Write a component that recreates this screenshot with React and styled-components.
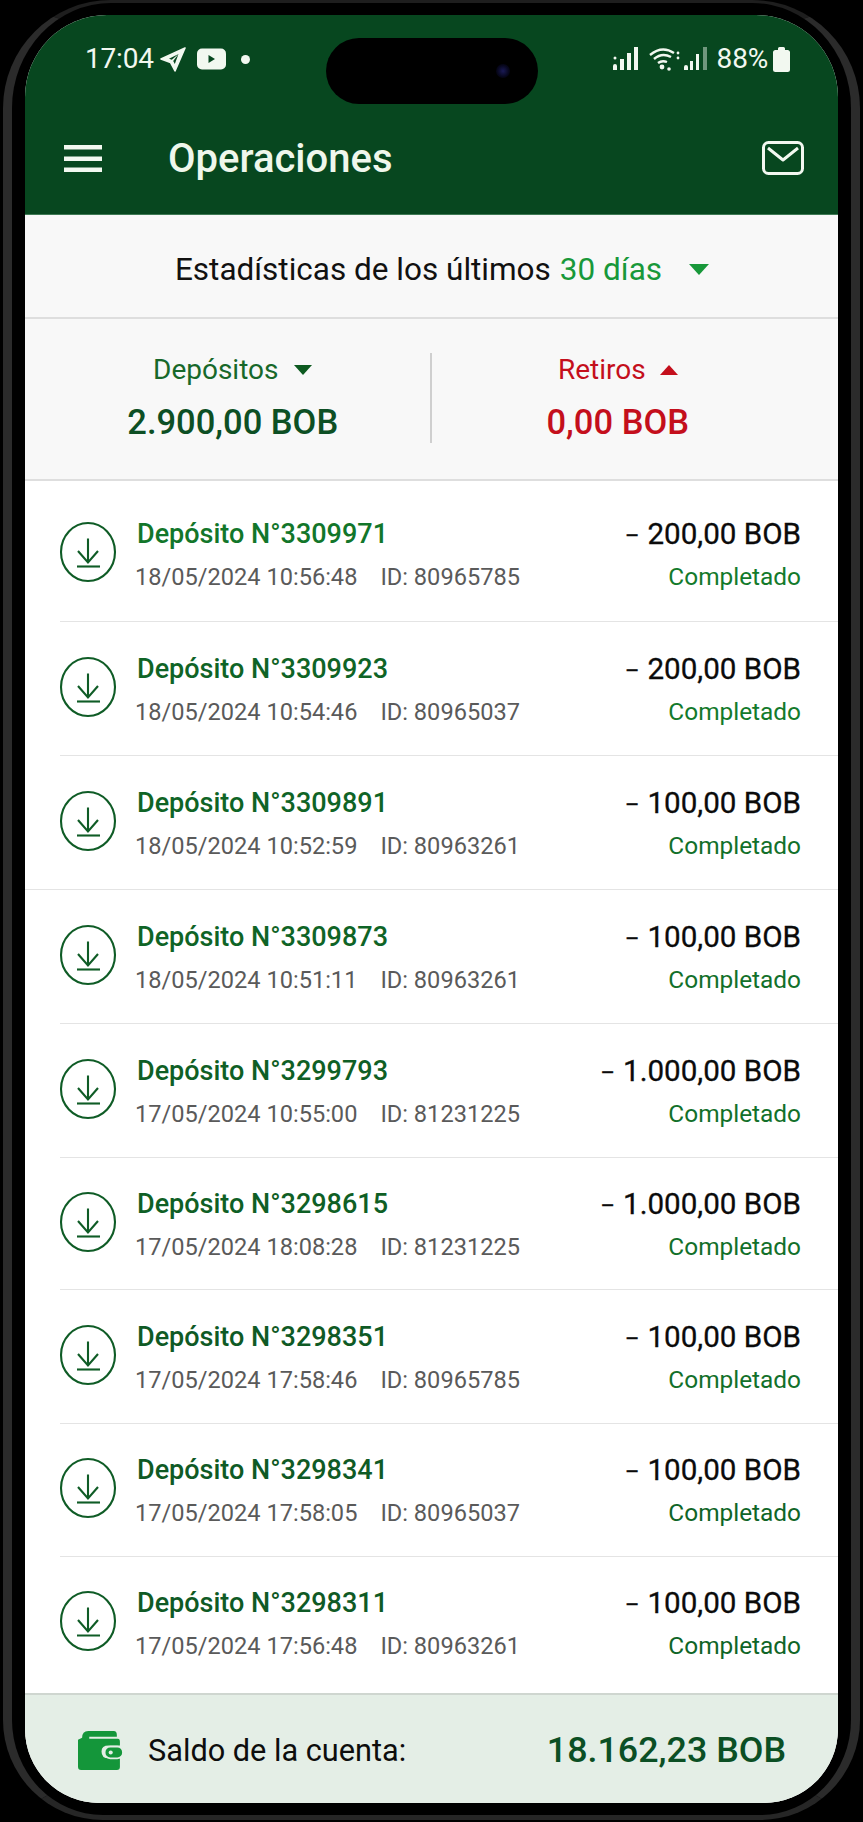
import React from 'react';
import styled, { createGlobalStyle } from 'styled-components';

const Global = createGlobalStyle`
  html, body { margin: 0; padding: 0; background: #000; }
  body { font-family: Roboto, "Liberation Sans", sans-serif; }
`;

const Page = styled.div`
  width: 863px; height: 1822px; background: #000; box-sizing: border-box;
  padding: 0 3px 2px 3px; overflow: hidden;
`;
const Bezel = styled.div`
  height: 100%; box-sizing: border-box; background: #000;
  border-style: solid; border-color: #1e1e1e #2b2b2b #262626 #2b2b2b; border-width: 3px 9px 5px 9px;
  border-radius: 108px 108px 100px 100px;
  padding: 12px 13px 12px 13px;
`;
const Screen = styled.div`
  position: relative; height: 100%; display: flex; flex-direction: column;
  background: #fff; overflow: hidden; border-radius: 82px 82px 74px 74px;
`;
const Pill = styled.div`
  position: absolute; left: 301px; top: 23px; width: 212px; height: 66px;
  border-radius: 33px; background: #000;
`;
const Lens = styled.div`
  position: absolute; right: 28px; top: 26px; width: 14px; height: 14px; border-radius: 50%;
  background: radial-gradient(circle, #1a1a55 0%, #06061a 60%, #000 100%);
`;
const Header = styled.header`
  height: 200px; flex: none; background: #07471f; color: #f2f8f0; box-sizing: border-box;
  display: flex; flex-direction: column; border-bottom: 1px solid #3f7a55;
`;
const StatusBar = styled.div`
  display: flex; align-items: center; justify-content: space-between;
  padding: 29px 48px 0 60px; height: 30px;
`;
const StatusGroup = styled.div`display: flex; align-items: center;`;
const StatusText = styled.span`font-size: 28px; line-height: 30px; letter-spacing: -0.2px; margin-left: ${p => p.$ml || 0}px;`;
const StatusIcon = styled.svg`display: block; flex: none; margin-left: ${p => p.$ml || 0}px;`;
const NavBar = styled.div`
  display: flex; align-items: center; padding: 0 34px 0 39px; margin-top: 59px; height: 50px;
`;
const NavTitle = styled.h1`
  margin: 2px 0 0 66px; flex: 1; font-size: 40px; font-weight: 500; line-height: 50px; color: #eff7ec;
`;
const PeriodBar = styled.div`
  height: 104px; flex: none; box-sizing: border-box; background: #f8f8f8;
  border-bottom: 2px solid #dedede; display: flex; align-items: center; justify-content: center;
  font-size: 31.5px; color: #111; padding: 6px 0 0 21px;
`;
const PeriodValue = styled.span`color: #18983a; margin-left: 9px;`;
const Triangle = styled.span`
  display: inline-block; width: 0; height: 0; margin-left: ${p => p.$ml}px;
  border-left: ${p => p.$w / 2}px solid transparent; border-right: ${p => p.$w / 2}px solid transparent;
  ${p => (p.$up ? 'border-bottom' : 'border-top')}: ${p => p.$h}px solid ${p => p.$c};
`;
const Stats = styled.div`
  height: 162px; flex: none; box-sizing: border-box; background: #f8f8f8; padding-bottom: 2px;
  border-bottom: 2px solid #dedede; display: grid; grid-template-columns: 1fr 1fr; align-items: center;
`;
const StatCol = styled.div`
  display: flex; flex-direction: column; align-items: center; height: 90px; box-sizing: border-box;
  padding: ${p => (p.$div ? '0 0 0 11px' : '0 34px 0 0')};
  ${p => p.$div && 'border-right: 2px solid #cfcfcf;'}
`;
const StatLabel = styled.div`
  display: flex; align-items: center; font-size: 28px; line-height: 34px; color: ${p => p.$c};
`;
const StatValue = styled.div`
  margin-top: 13px; font-size: 34.5px; line-height: 44px; font-weight: 500; color: ${p => p.$c};
`;
const List = styled.div`flex: 1; display: flex; flex-direction: column; min-height: 0;`;
const Row = styled.div`
  height: ${p => p.$h}px; flex: none; box-sizing: border-box; display: flex; align-items: center;
  padding: ${p => p.$pt || 0}px 37px ${p => p.$pb || 0}px 34px;
`;
const Sep = styled.div`
  height: 1px; flex: none; background: #e4e4e4; margin-left: ${p => (p.$full ? 0 : 35)}px;
`;
const RowIcon = styled.svg`display: block; flex: none; width: 58px; height: 62px; margin-top: -4px;`;
const RowMain = styled.div`flex: 1; margin-left: 18px; min-width: 0;`;
const RowTitle = styled.div`
  font-size: 27px; line-height: 36px; font-weight: 500; color: ${p => p.$c}; margin-left: 2px;
`;
const RowMeta = styled.div`
  margin-top: 10px; font-size: 23.6px; line-height: 30px; color: #5a5a5a; display: flex; gap: 23px;
`;
const RowEnd = styled.div`display: flex; flex-direction: column; align-items: flex-end;`;
const Amount = styled.div`
  display: flex; align-items: center; font-size: 29.6px; line-height: 36px; color: #0b0b0b;
  -webkit-text-stroke: 0.3px #0b0b0b;
`;
const Dash = styled.span`font-size: 22px; margin-right: 8px; transform: translateY(2px);`;
const Status = styled.div`margin-top: 10px; font-size: 24.4px; line-height: 30px; color: ${p => p.$c};`;
const Footer = styled.footer`
  height: 110px; flex: none; box-sizing: border-box; background: #e4eee6; border-top: 2px solid #cfd6d0;
  display: flex; align-items: center; padding: 2px 52px 0 52px;
`;
const FootLabel = styled.div`flex: 1; margin-left: 24px; font-size: 30.7px; color: #0d0d0d;`;
const FootValue = styled.div`font-size: 35.8px; font-weight: 500; color: #0b4f24;`;

const rows = [
  ['3309971', '18/05/2024 10:56:48', '80965785', '200,00', 141, '#12762a', '#137a2b'],
  ['3309923', '18/05/2024 10:54:46', '80965037', '200,00', 134, '#0f6426', '#137a2b'],
  ['3309891', '18/05/2024 10:52:59', '80963261', '100,00', 134, '#0f6426', '#12702a'],
  ['3309873', '18/05/2024 10:51:11', '80963261', '100,00', 134, '#0f6426', '#12702a'],
  ['3299793', '17/05/2024 10:55:00', '81231225', '1.000,00', 134, '#0f5f25', '#12702a'],
  ['3298615', '17/05/2024 18:08:28', '81231225', '1.000,00', 132, '#0f5f25', '#12702a'],
  ['3298351', '17/05/2024 17:58:46', '80965785', '100,00', 134, '#0f5a25', '#12702a'],
  ['3298341', '17/05/2024 17:58:05', '80965037', '100,00', 133, '#0f5a25', '#0f6527'],
  ['3298311', '17/05/2024 17:56:48', '80963261', '100,00', 136, '#0f5a25', '#0f6527'],
];

const DepositIcon = () => (
  <RowIcon viewBox="0 0 58 62" fill="none" stroke="#0f5c26" strokeWidth="2.1">
    <ellipse cx="29" cy="31" rx="27" ry="29" />
    <path d="M29 17.500V41.500M19 30 L29 41.500 L39 30" />
    <path d="M18 45.500H41" />
  </RowIcon>
);

const Wallet = () => (
  <StatusIcon width="47" height="41" viewBox="0 0 46 42" preserveAspectRatio="none">
    <path d="M5 8 Q5 1 11 1 H36 Q39 1 39 5 V7 H12 V9 H40 Q42 9 42 12 V16 H31 Q24 16 24 22 Q24 29 31 29 H42 V38 Q42 41 39 41 H4 Q1 41 1 38 V10 Z" fill="#14963a" />
    <rect x="27" y="17" width="18" height="12" rx="5.500" fill="#14963a" stroke="#e4eee6" strokeWidth="1.800" />
    <circle cx="33" cy="23" r="2" fill="#e4eee6" />
  </StatusIcon>
);

export default function App() {
  return (
    <Page>
      <Global />
      <Bezel>
        <Screen>
          <Pill><Lens /></Pill>
          <Header>
            <StatusBar>
              <StatusGroup>
                <StatusText>17:04</StatusText>
                <StatusIcon $ml={6} width="26" height="25" viewBox="0 0 26 25">
                  <path d="M25 1 L1 12 L10.500 15.500 L15 24 Z" fill="#f2f8f0" stroke="#f2f8f0" strokeWidth="1.600" strokeLinejoin="round" />
                  <path d="M18.500 7 L9 11.800 L11.800 12.800 Z M18.500 7 L13.200 14 L14.800 17 Z" fill="#07471f" />
                </StatusIcon>
                <StatusIcon $ml={11} width="29" height="22" viewBox="0 0 29 22">
                  <rect width="29" height="21" rx="5" y="0.500" fill="#f2f8f0" />
                  <path d="M11.500 7 L18 11 L11.500 15 Z" fill="#07471f" />
                </StatusIcon>
                <StatusIcon $ml={15} width="9" height="9" viewBox="0 0 9 9"><circle cx="4.500" cy="4.500" r="4.500" fill="#f2f8f0" /></StatusIcon>
              </StatusGroup>
              <StatusGroup>
                <StatusIcon width="25" height="24" viewBox="0 0 25 24" fill="#f2f8f0">
                  <circle cx="2" cy="11" r="1.500" /><path d="M0 23v-4q0-2 2-2t2 2v4zM7 23V12h4v11zM14 23V6h4v17zM21 23V0h4v23z" />
                </StatusIcon>
                <StatusIcon $ml={11} width="31" height="25" viewBox="0 0 31 25" fill="none" stroke="#f2f8f0" strokeWidth="2.400">
                  <path d="M1 8 Q13 -2 25 6M5 12 Q13 5 22 10M9 16 Q13 13 18 15" />
                  <circle cx="13" cy="20" r="2.400" fill="#f2f8f0" stroke="none" />
                  <circle cx="20" cy="22" r="1.800" fill="#f2f8f0" stroke="none" />
                  <circle cx="29" cy="6" r="1.400" fill="#f2f8f0" stroke="none" />
                  <circle cx="29" cy="11" r="1.400" fill="#f2f8f0" stroke="none" />
                </StatusIcon>
                <StatusIcon $ml={4} width="23" height="24" viewBox="0 0 23 24" fill="#f2f8f0">
                  <path d="M0 23v-3q0-2 2-2t2 2v3zM6 23V14h3v9zM12 23V7h3v16z" />
                  <path d="M19 23V0h4v23z" opacity="0.450" />
                </StatusIcon>
                <StatusText $ml={10}>88%</StatusText>
                <StatusIcon $ml={5} width="17" height="25" viewBox="0 0 17 25" fill="#f2f8f0">
                  <path d="M5 3V1.500Q5 0 6.500 0h4Q12 0 12 1.500V3h2.500Q17 3 17 5.500V22.500Q17 25 14.500 25h-12Q0 25 0 22.500V5.500Q0 3 2.500 3z" />
                </StatusIcon>
              </StatusGroup>
            </StatusBar>
            <NavBar>
              <StatusIcon width="38" height="27" viewBox="0 0 38 27" fill="#f2f8f0">
                <rect width="38" height="4.500" y="0" /><rect width="38" height="4.500" y="11.500" /><rect width="38" height="4.500" y="22.500" />
              </StatusIcon>
              <NavTitle>Operaciones</NavTitle>
              <StatusIcon width="42" height="34" viewBox="0 0 42 34" fill="none" stroke="#f2f8f0" strokeWidth="3" strokeLinejoin="round">
                <rect x="1.500" y="1.500" width="39" height="31" rx="5" />
                <path d="M6 7 L21 19 L36 7" />
              </StatusIcon>
            </NavBar>
          </Header>
          <PeriodBar>
            Estadísticas de los últimos
            <PeriodValue>30 días</PeriodValue>
            <Triangle $ml={27} $w={20} $h={11} $c="#18983a" />
          </PeriodBar>
          <Stats>
            <StatCol $div>
              <StatLabel $c="#17682a">Depósitos<Triangle $ml={16} $w={18} $h={10} $c="#0d5a20" /></StatLabel>
              <StatValue $c="#0d4f24">2.900,00 BOB</StatValue>
            </StatCol>
            <StatCol>
              <StatLabel $c="#c40f1c">Retiros<Triangle $ml={14} $w={19} $h={10} $up $c="#c40f1c" /></StatLabel>
              <StatValue $c="#c40f1c">0,00 BOB</StatValue>
            </StatCol>
          </Stats>
          <List>
            {rows.map((r, i) => (
              <React.Fragment key={r[0]}>
                <Row
                  $h={r[4] - (i < rows.length - 1 ? 1 : 0)}
                  $pt={i === 0 ? 5 : 0}
                  $pb={i === rows.length - 1 ? 5 : 0}
                >
                  <DepositIcon />
                  <RowMain>
                    <RowTitle $c={r[5]}>Depósito N°{r[0]}</RowTitle>
                    <RowMeta><span>{r[1]}</span><span>ID: {r[2]}</span></RowMeta>
                  </RowMain>
                  <RowEnd>
                    <Amount><Dash>–</Dash>{r[3]} BOB</Amount>
                    <Status $c={r[6]}>Completado</Status>
                  </RowEnd>
                </Row>
                {i < rows.length - 1 && <Sep $full={i === 2} />}
              </React.Fragment>
            ))}
          </List>
          <Footer>
            <Wallet />
            <FootLabel>Saldo de la cuenta:</FootLabel>
            <FootValue>18.162,23 BOB</FootValue>
          </Footer>
        </Screen>
      </Bezel>
    </Page>
  );
}
